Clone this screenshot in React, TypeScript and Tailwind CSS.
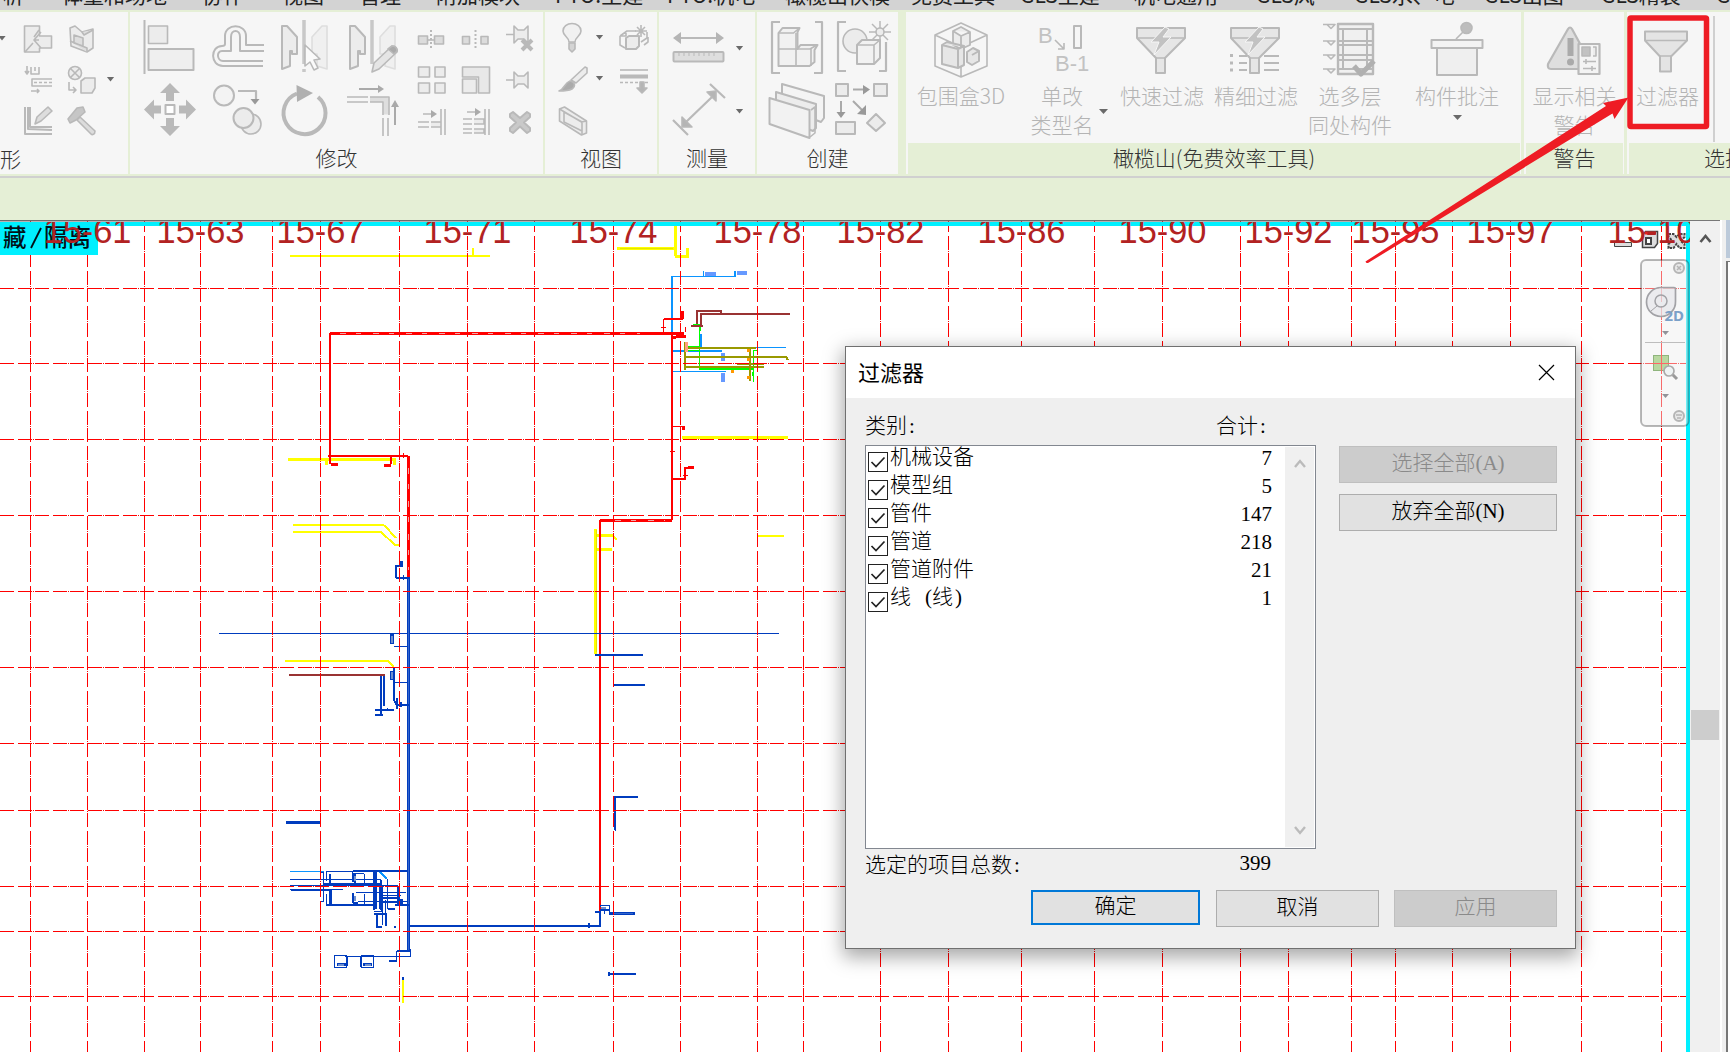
import React from "react";

const SANS = 'font-["Noto_Sans_CJK_SC",sans-serif]';
const SONG = 'font-["Liberation_Serif","Noto_Sans_CJK_SC",serif]';

type BoxProps = { x: number; y: number; w: number; h: number; children?: React.ReactNode };

/* A slice of the ribbon drawing plane, so neighbouring icons share one coordinate system. */
function Glyph({ x, y, w, h, children }: BoxProps) {
  return (
    <svg
      className="block shrink-0"
      width={w}
      height={h}
      viewBox={`${x} ${y} ${w} ${h}`}
      fill="#ececec"
      stroke="#b9b9b9"
      strokeWidth="1.6"
      strokeLinejoin="round"
    >
      {children}
    </svg>
  );
}

const Caret = ({ x, y }: { x: number; y: number }) => (
  <path d={`M${x - 3.6} ${y - 2}h7.2l-3.6 4.4z`} fill="#6a6a6a" stroke="none" />
);

const tabs: [number, string][] = [
  [-18, "分析"], [62, "体量和场地"], [202, "协作"], [282, "视图"], [359, "管理"], [436, "附加模块"],
  [555, "PTO.土建"], [667, "PTO.机电"], [785, "橄榄山快模·免费工具"], [1020, "GLS土建"],
  [1134, "机电通用"], [1256, "GLS风"], [1354, "GLS水、电"], [1484, "GLS出图"], [1601, "GLS精装"], [1716, "GLS"], [1800, ""],
];

function TabStrip() {
  return (
    <div className="h-[10px] shrink-0 overflow-hidden bg-[#d3d3d3]">
      <div className="-mt-[20px] -ml-[18px] flex h-[28px] text-[21px] leading-[28px] text-[#222] whitespace-nowrap">
        {tabs.slice(0, -1).map(([x, label], i) => (
          <span key={i} className="shrink-0" style={{ width: tabs[i + 1][0] - x }}>
            {label}
          </span>
        ))}
      </div>
    </div>
  );
}

function Panel({ title, width, green, children }: { title: string; width: string; green?: boolean; children: React.ReactNode }) {
  return (
    <div className={`flex shrink-0 flex-col bg-[#f6f6f6] ${width}`}>
      <div className="flex h-[131px]">{children}</div>
      <div
        className={`h-[31px] text-center text-[21px] leading-[29px] font-light whitespace-nowrap text-[#333] ${green ? "ml-[2px] mr-[1px] bg-[#e5efd6]" : ""}`}
      >
        {title}
      </div>
    </div>
  );
}

function BigButton({ width, lines, icon, caret }: { width: string; lines: string[]; icon: React.ReactNode; caret?: "side" | "below" }) {
  return (
    <div className={`relative flex shrink-0 flex-col items-center ${width}`}>
      <div className="h-[69px]">{icon}</div>
      <div className="text-center text-[21px] leading-[28.5px] font-light whitespace-nowrap text-[#b4b4b4]">
        {lines.map((l) => (
          <div key={l}>{l}</div>
        ))}
      </div>
      {caret === "side" && (
        <svg className="absolute right-[5px] bottom-[28px]" width="9" height="6" viewBox="0 0 9 6">
          <path d="M0 0h9L4.500 5z" fill="#6a6a6a" />
        </svg>
      )}
      {caret === "below" && (
        <svg className="mt-[5px]" width="9" height="6" viewBox="0 0 9 6">
          <path d="M0 0h9L4.500 5z" fill="#6a6a6a" />
        </svg>
      )}
    </div>
  );
}

const Funnel = ({ x, bolt, list }: { x: number; bolt?: boolean; list?: boolean }) => (
  <Glyph x={x - 39} y={12} w={80} h={69}>
    {list && (
      <path
        d={`M${x - 16} 56h8M${x - 16} 63h8M${x - 16} 70h8M${x + 9} 56h15M${x + 9} 63h15M${x + 9} 70h15`}
        strokeWidth="2"
      />
    )}
    {list && <path d={`M${x - 25} 55.500h3M${x - 25} 63h3M${x - 25} 70h3`} strokeWidth="3" />}
    <path d={`M${x - 24} 28h48v10l-20 20v15h-9v-15l-19-20z`} fill="#e6e6e6" strokeWidth="2" />
    <path d={`M${x - 24} 38h48M${x - 5} 58h9`} />
    {bolt && <path d={`M${x + 4} 27l-14 15h8l-5 13 17-18h-8l6-8z`} fill="#c2c2c2" stroke="#f6f6f6" strokeWidth="1" />}
  </Glyph>
);

function Ribbon() {
  return (
    <div className="flex h-[166px] shrink-0 bg-[#e5efd6] pt-[2px] pb-[2px]">
      <Panel title="" width="w-[128px]">
        <div className="-mr-[128px] w-[128px] shrink-0 pt-[8px]">
          <Glyph x={0} y={20} w={128} h={123}>
            <Caret x={2} y={38} />
            <path d="M24.500 26h15v10h12v12h-12v4h-15z" />
            <path d="M41 32l-7 8 7 8M34 40h5M39 30l-5 7M25 52l8-9" fill="none" />
            <path d="M70 28l5-2 7 6 11-3v19l-6 4-16-6z" />
            <path d="M74 35l9 3v8l-9-3zM82 32l2 3 9-5M87 52v-4l-17-7" fill="#dedede" />
            <path d="M27 66v8m-2-3l2 3 2-3M31 67v7h8v-7M35 67v4" fill="none" />
            <path d="M52 79H32v7h20M31 91h8m-2-2l2 2-2 2" fill="none" />
            <path d="M34 82.500h18" strokeDasharray="3 2" />
            <circle cx="75" cy="73" r="6.500" />
            <path d="M70.500 68.500l9 9m0-9l-9 9M69 82v8h7m-3-3l3 3-3 3" fill="none" />
            <path d="M81 81l4-3h10v10l-3 5H81z" />
            <Caret x={110.500} y={79} />
            <path d="M25 107v27h27M30 107v20h22M28 107v22l24 1" fill="none" strokeWidth="2" />
            <path d="M35 124l2-7 11-10 4 4-11 10z" fill="#ddd" />
            <path d="M68 119l9-11 6-1 2 5-9 8-6 3z" fill="#c6c6c6" />
            <path d="M80 117l15 14c0 4-3 4-4 3l-14-14z" fill="#dcdcdc" />
          </Glyph>
        </div>
        <span className="relative top-[132px] text-[21px] leading-[28px] font-light text-[#333]">形</span>
      </Panel>
      <div className="w-[2px] shrink-0" />
      <Panel title="修改" width="w-[413px]">
        <div className="grid grid-cols-[68px_68px_68px_68px] content-start pt-[3px] pl-[6px]">
          <Glyph x={136} y={15} w={68} h={64}>
            <path d="M144.500 20v54" strokeWidth="2" />
            <rect x="148.500" y="26" width="19" height="17.500" />
            <rect x="148.500" y="49" width="45" height="21" strokeWidth="2" fill="#efefef" />
          </Glyph>
          <Glyph x={204} y={15} w={68} h={64}>
            <g fill="none" strokeWidth="2">
              <path d="M264 45H246V36C246 23 225 23 225 36V44Q225 46 222 46C210 46 210 66 223 66H263" />
              <path d="M264 51H240V37C240 29 231 29 231 37V51H222C216 51 217 61 223 61H263" />
            </g>
          </Glyph>
          <Glyph x={272} y={15} w={68} h={64}>
            <path d="M282 26h5l10 11v17h-5v-3h-2v15l-8 3z" strokeWidth="2" />
            <path d="M327 26h-5l-10 11v17h5v12l10 3z" stroke="#dedede" fill="#f0f0f0" />
            <path d="M304 20v44M304 69v3" stroke="#c8c8c8" strokeWidth="3.500" />
            <path d="M305 45l15 14-6 1 4 8-4 2-4-8-5 4z" fill="#fafafa" />
          </Glyph>
          <Glyph x={340} y={15} w={68} h={64}>
            <path d="M350 26h5l10 11v17h-5v-3h-2v15l-8 3z" strokeWidth="2" />
            <path d="M395 26h-5l-10 11v17h5v12l10 3z" stroke="#dedede" fill="#f0f0f0" />
            <path d="M372 20v44" stroke="#c8c8c8" strokeWidth="3.500" />
            <path d="M372 72l2-9 18-17c4 0 6 3 5 6l-18 17z" fill="#e5e5e5" />
            <path d="M388 49l6 5 3-3c0-4-2-5-5-5z" fill="#aaa" />
          </Glyph>
          <Glyph x={136} y={79} w={68} h={64}>
            <path
              d="M170 83l10 10h-6v8h-8v-8h-6zM170 136l10-10h-6v-8h-8v8h-6zM144 109.500l10-10v6h7v8h-7v6zM196 109.500l-10-10v6h-7v8h7v6z"
              fill="#b9b9b9"
              stroke="none"
            />
            <rect x="165.500" y="105" width="9" height="9" fill="#fff" strokeWidth="2" />
          </Glyph>
          <Glyph x={204} y={79} w={68} h={64}>
            <circle cx="251" cy="124" r="10" />
            <circle cx="224" cy="95.500" r="10" fill="#f3f3f3" strokeWidth="2" />
            <circle cx="243.500" cy="118" r="10" strokeWidth="2" />
            <path d="M238 91h18v9" fill="none" strokeWidth="2.200" />
            <path d="M250.500 99h9l-4.500 5.500z" fill="#999" stroke="none" />
          </Glyph>
          <Glyph x={272} y={79} w={68} h={64}>
            <path d="M318 97A21 21 0 1 1 297 93.500" fill="none" strokeWidth="4" />
            <path d="M296.500 85l16.500 8-16 9z" fill="#b0b0b0" stroke="none" />
          </Glyph>
          <Glyph x={340} y={79} w={68} h={64}>
            <path d="M359 89h20M395 125v-19" stroke="#aaa" strokeWidth="2" />
            <path d="M378 85l6 4-6 4zM391 107l4-7 4 7z" fill="#aaa" stroke="none" />
            <path d="M370 99.500h16v15" stroke="#dedede" strokeWidth="5" fill="none" />
            <path d="M347 97h21M347 102h21M370 97h19v18M370 102h13v13M383 118v18M388 118v18" fill="none" strokeWidth="1.600" />
          </Glyph>
        </div>
        <div className="grid grid-cols-[44px_44px_44px] content-start pt-[8px]">
          <Glyph x={408} y={20} w={44} h={41}>
            <rect x="418.500" y="36" width="9" height="8" fill="#dcdcdc" />
            <rect x="434.500" y="36" width="9" height="8" fill="#dcdcdc" />
            <path d="M427 40h8" />
            <path d="M431 30v20" strokeDasharray="2 2" strokeWidth="2" />
          </Glyph>
          <Glyph x={452} y={20} w={44} h={41}>
            <rect x="462.500" y="36.500" width="7" height="7.500" fill="#dcdcdc" />
            <rect x="481" y="36.500" width="7" height="7.500" fill="#dcdcdc" />
            <path d="M475.500 30v20" strokeDasharray="2 2" strokeWidth="2" />
          </Glyph>
          <Glyph x={496} y={20} w={44} h={41}>
            <path d="M506 34.500h8M514 26v17l4-4h6l4 4V26l-4 4h-6z" />
            <path d="M522 40l10 10m0-10l-10 10" strokeWidth="4" />
          </Glyph>
          <Glyph x={408} y={61} w={44} h={41}>
            <path d="M418.500 67h11v10h-11zM435 67h10v10h-10zM418.500 83h11v10h-11zM435 83h10v10h-10z" />
          </Glyph>
          <Glyph x={452} y={61} w={44} h={41}>
            <path d="M462.500 67h27v26h-11V77h-16z" fill="#e8e8e8" />
            <rect x="462.500" y="79" width="14" height="14" />
          </Glyph>
          <Glyph x={496} y={61} w={44} h={41}>
            <path d="M506 80h8M514 72v16l4-4h6l4 4V72l-4 4h-6z" />
          </Glyph>
          <Glyph x={408} y={102} w={44} h={41}>
            <path d="M423 114h10M418 122h11M418 127h11M431 122h10v5h-10M441 109v26M445 109v26" strokeWidth="1.600" />
            <path d="M431 110l6 4-6 4z" fill="#aaa" stroke="none" />
          </Glyph>
          <Glyph x={452} y={102} w={44} h={41}>
            <path d="M467 112h10M463 119h9M463 124h9M463 129h9M463 133h9M474 119h10v5h-10M474 129h10v4h-10M485 109v26M489 109v26" strokeWidth="1.600" />
            <path d="M475 108l6 4-6 4z" fill="#aaa" stroke="none" />
          </Glyph>
          <Glyph x={496} y={102} w={44} h={41}>
            <path d="M510 114l3-2 7 6 7-6 3 2v3l-6 5.500 6 5.500v3l-3 2-7-6.500-7 6.500-3-2v-3l6-5.500-6-5.500z" fill="#c9c9c9" strokeWidth="2" />
          </Glyph>
        </div>
      </Panel>
      <div className="w-[2px] shrink-0" />
      <Panel title="视图" width="w-[112px]">
        <div className="grid grid-cols-[64px_48px] content-start pt-[8px]">
          <Glyph x={545} y={20} w={64} h={41}>
            <path d="M569 42c0-5-6-6-6-11a9 7.500 0 0 1 18 0c0 5-6 6-6 11z" fill="#f1f1f1" />
            <path d="M569 43h6v6l-3 3-3-3z" fill="#d4d4d4" />
            <Caret x={599.500} y={37} />
          </Glyph>
          <Glyph x={609} y={20} w={48} h={41}>
            <path d="M620 36l7-5h9M620 36v9l5 3M620 36h6v-5M641 42l6-4v-6M644 45l4-3v-5" fill="none" />
            <path d="M626 38l3-2h10v10l-3 3h-10z" strokeWidth="2" />
            <path d="M641 25v12M635 31h12M637 27l8 8M645 27l-8 8" />
          </Glyph>
          <Glyph x={545} y={61} w={64} h={41}>
            <path d="M571 80l14-13 2 1v5l-11 10z" />
            <path d="M570 81c5 1 6 5 2 8-4 2-8 2-13 2 6-2 5-8 11-10z" fill="#ababab" />
            <Caret x={599.500} y={78} />
          </Glyph>
          <Glyph x={609} y={61} w={48} h={41}>
            <path d="M620 70h28" />
            <path d="M620 76.500h28" strokeWidth="4" />
            <path d="M620 82.500h28" strokeDasharray="3 2" />
            <path d="M640 82h4v6h3l-5 5-5-5h3z" fill="#b5b5b5" />
          </Glyph>
          <Glyph x={545} y={102} w={64} h={41}>
            <path d="M559.500 109l5-2 22 14v12l-5 2-22-14z" />
            <path d="M564 112l18 10v12M559.500 109l22 13 5-1M564 112v10l18 9" fill="none" />
          </Glyph>
        </div>
      </Panel>
      <div className="w-[2px] shrink-0" />
      <Panel title="测量" width="w-[96px]">
        <div className="flex flex-col pt-[3px]">
          <Glyph x={659} y={15} w={96} h={64}>
            <path d="M677 38h42" strokeWidth="2" />
            <path d="M673 38l8-6v12zM724 38l-8-6v12z" fill="#b5b5b5" stroke="none" />
            <rect x="673.500" y="52" width="50" height="9.500" rx="1" fill="#dedede" strokeWidth="2" />
            <path d="M679 53v3m5-3v3m5-3v3m5-3v3m5-3v3m5-3v3m5-3v3m5-3v3" strokeWidth="1" />
            <Caret x={739.500} y={48} />
          </Glyph>
          <Glyph x={659} y={79} w={96} h={64}>
            <path d="M673 120l15 15M710 84l15 14M686 122l26-25" strokeWidth="2.200" />
            <path d="M682 117v10h10zM716 91v10l-9-9z" fill="#b5b5b5" />
            <Caret x={739.500} y={111} />
          </Glyph>
        </div>
      </Panel>
      <div className="w-[2px] shrink-0" />
      <Panel title="创建" width="w-[141px]">
        <div className="grid grid-cols-[70px_64px] content-start pt-[3px] pl-[7px]">
          <Glyph x={764} y={15} w={70} h={64}>
            <path d="M780 22h-8v51h8M815 22h7v51h-8" fill="none" strokeWidth="2.200" />
            <path d="M778.500 33l4-5h17l-2 4v17l3-4h17l-3 5v12l-5 4h-31z" fill="#f1f1f1" strokeWidth="2" />
            <path d="M778.500 33h15l6-5M796 33v33M779 49h31l7-4M811 49v17" fill="none" />
          </Glyph>
          <Glyph x={834} y={15} w={64} h={64}>
            <path d="M846 22h-8v49h8M879 71h7V42" fill="none" strokeWidth="2.200" />
            <circle cx="855" cy="41" r="12" />
            <path d="M857 45l5-5h18v18l-6 6h-17z" fill="#f2f2f2" strokeWidth="2" />
            <path d="M857 45h17l6-5M874 45v19" fill="none" />
            <path d="M880 21v22M869 32h22M872 24l16 16M888 24l-16 16" strokeWidth="1.500" />
            <circle cx="880" cy="32" r="4" />
          </Glyph>
          <Glyph x={764} y={79} w={70} h={64}>
            <path d="M782 84l42 12v22l-3 4-39-15z" fill="#f4f4f4" strokeWidth="2" />
            <path d="M776 92l40 12v24l-3 3-37-15z" strokeWidth="2" />
            <path d="M769.500 98l40 12v28l-40-14z" fill="#f2f2f2" strokeWidth="2" />
            <path d="M811 110l4-3v26l-5 4" fill="none" />
          </Glyph>
          <Glyph x={834} y={79} w={64} h={64}>
            <path d="M836 84h12v12h-12zM874 84h13v12h-13zM836 122h19v12h-19zM876 114l9 9-9 8-9-8z" strokeWidth="2" />
            <path d="M853 89.500h11M841 101v12M853 101l10 10" stroke="#aaa" strokeWidth="2" />
            <path d="M863 85l7 4.500-7 5zM836.500 112h9l-4.500 6zM866 115v-10l-9 9z" fill="#999" stroke="none" />
          </Glyph>
        </div>
      </Panel>
      <div className="w-[8px] shrink-0" />
      <Panel title="橄榄山(免费效率工具)" width="w-[615px]" green>
        <div className="flex pl-[5px]">
          <BigButton
            width="w-[100px]"
            lines={["包围盒3D"]}
            icon={
              <Glyph x={921} y={12} w={80} h={69}>
                <path d="M961 23l26 12v31l-26 11-26-11V35zM935 35l26 12 26-12M961 47v30" fill="none" />
                <path d="M953 31l8-4 9 5v13l-9 4-8-4zM953 31l8 5 9-4M961 36v12" strokeWidth="1.800" />
                <path d="M942 45l5-3 17 4v19l-6 3-16-4zM958 49v18M942 45l16 4 6-3M967 52l6-4 6 3v10l-7 4-5-3zM972 55l7-4" fill="#e6e6e6" strokeWidth="2" />
              </Glyph>
            }
          />
          <BigButton
            width="w-[102px]"
            lines={["单改", "类型名"]}
            caret="side"
            icon={
              <Glyph x={1023} y={12} w={80} h={69}>
                <g fill="#c2c2c2" stroke="none" fontFamily="Liberation Sans" fontSize="22">
                  <text x="1039" y="43">B</text>
                  <text x="1056" y="71">B-1</text>
                </g>
                <rect x="1075" y="26" width="7" height="22" fill="none" strokeWidth="2" />
                <path d="M1056 40l9 9m0-6v6h-6" fill="none" />
              </Glyph>
            }
          />
          <BigButton width="w-[98px]" lines={["快速过滤"]} icon={<Funnel x={1162} bolt />} />
          <BigButton width="w-[90px]" lines={["精细过滤"]} icon={<Funnel x={1256} bolt list />} />
          <BigButton
            width="w-[98px]"
            lines={["选多层", "同处构件"]}
            icon={
              <Glyph x={1310} y={12} w={80} h={69}>
                <path d="M1323 24.500h12l-4 4-4-4M1323 41h12l-4 4-4-4M1323 55h12l-4 4-4-4M1323 69h12l-4 4-4-4" fill="none" />
                <rect x="1338" y="24" width="35" height="50" fill="#f0f0f0" strokeWidth="2.400" />
                <path d="M1338 29h35M1338 41h35M1338 45h35M1338 55h35M1338 60h35M1338 69h35M1343 30v38M1367 30v38" strokeWidth="2" />
                <path d="M1354 66l7 8 13-13" fill="none" stroke="#b0b0b0" strokeWidth="5" />
              </Glyph>
            }
          />
          <BigButton
            width="w-[116px]"
            lines={["构件批注"]}
            caret="below"
            icon={
              <Glyph x={1417} y={12} w={80} h={69}>
                <path d="M1456 39l9-9" />
                <circle cx="1466.500" cy="28" r="5.500" fill="#bdbdbd" />
                <rect x="1437" y="47" width="40" height="28" fill="#efefef" strokeWidth="2" />
                <rect x="1431.500" y="40" width="51" height="8" fill="#f3f3f3" strokeWidth="2" />
              </Glyph>
            }
          />
        </div>
      </Panel>
      <div className="w-[3px] shrink-0" />
      <Panel title="警告" width="w-[100px]" green>
        <BigButton
          width="w-[101px]"
          lines={["显示相关", "警告"]}
          icon={
            <Glyph x={1535} y={12} w={80} h={69}>
              <path d="M1568 29q2-3 4 0l19 35q1 5-3 5h-37q-4 0-3-5z" fill="#dedede" strokeWidth="2.200" />
              <path d="M1570.500 38v18" stroke="#aaa" strokeWidth="6" />
              <circle cx="1570.500" cy="62" r="3.500" fill="#aaa" stroke="none" />
              <rect x="1578.500" y="44" width="21" height="30" fill="#f4f4f4" strokeWidth="2.200" />
              <rect x="1582" y="47" width="8" height="9" fill="#c2c2c2" />
              <path d="M1593 47h3v9h-3M1583 61.500h13M1583 68.500h13M1586 59v5M1592 66v5" />
            </Glyph>
          }
        />
      </Panel>
      <div className="w-[3px] shrink-0" />
      <Panel title="选择" width="w-[195px]" green>
        <BigButton
          width="w-[81px]"
          lines={["过滤器"]}
          icon={
            <Glyph x={1628} y={12} w={80} h={69}>
              <path d="M1645 31.500h42v9l-16 16v15h-11v-15l-15-16z" fill="#e4e4e4" strokeWidth="2" />
              <path d="M1645 40.500h42M1660 56h11" />
            </Glyph>
          }
        />
        <div className="mt-[4px] ml-[5px] h-[126px] w-[2px] bg-[#d0d0d0]" />
      </Panel>
    </div>
  );
}

const gridX = [30, 87, 144, 200, 272, 320, 399, 467, 534, 613, 680, 757, 803, 880, 948, 1021, 1094, 1162, 1240, 1288, 1351, 1395, 1452, 1510, 1581, 1661];
const gridY = [288, 363, 439, 515, 591, 667, 743, 810, 886, 931, 996];
const labels: [number, string][] = [
  [45, "15-61"], [158, "15-63"], [278, "15-67"], [425, "15-71"], [571, "15-74"], [715, "15-78"], [838, "15-82"],
  [979, "15-86"], [1120, "15-90"], [1246, "15-92"], [1353, "15-95"], [1468, "15-97"], [1609, "15-10"],
];

type Pipe = [string, number, string];
const R = "#ff0000";
const Y = "#ffff00";
const B = "#003cbe";
const L = "#0a94ff";
const O = "#999900";
const M = "#993333";
const G = "#00ff00";
const pipes: Pipe[] = [
  [Y, 2, "M290 256H490M675 248v8M757 536h27M293 525H384M293 532H381M285 661H388M403 980v23"],
  [Y, 2, "M472.500 248v8M384 525l12 13M381 532l14 13h4M388 661l6 6M612 535l5 5"],
  [Y, 3, "M617 248.500H675M675.500 226v30M675 256h12v-8M682 437.500h106M288 459.500H394v5M326.500 460v5M595.500 529V654M596 535.500h16M596 549.500h16"],
  ["#e4e400", 1, "M620 248.500h53M596 530v122"],
  [L, 1, "M672 276.500H735M703.500 271v6M672 371.500h54M756 347.500h30M290 871.500h34"],
  [L, 2, "M672 276V333M735 271v6M672 351h50M701 334v14M380 872l7 7"],
  ["#6699ff", 4, "M705 274h11M737 273h10M723 353v8M723 373v9"],
  [G, 1, "M699.500 327V369M686 346.500h14M686 350.500h14M686 356.500h14M753.500 351v31M753 350.500h4M753 364.500h4M693 324.500h7v6"],
  [G, 2, "M699 369h54M753 372v4"],
  [O, 2, "M685 342v28M684 348h72M685 357h101l2 3M684 367h80M737 364h27M750 348v33"],
  ["#ff9900", 3, "M747 350.500h3M747 359.500h3M747 377.500h3M731 371h3"],
  [M, 2, "M697 324V311h24v3M701 325V314h89M691 326h12M289 675h96"],
  [R, 2, "M330 333V464M328 456H408M672 333V520M600 520V911M664 319h19M672 479h13v-11h5M391 455v9"],
  [R, 1, "M663.500 319v13M661 327h5M672 426.500h11M680.500 426v7M670 451.500h5M683 475.500h5M403.500 453v5M685.500 327v5"],
  [R, 3, "M330 333.500H684M408.500 456V577M600 520.500h72M331 464.500h7M384 465.500h7M682.500 311v8M688 467.500h6M672 338l12-3M680 336h6M683 426v4"],
  ["#ffa080", 3, "M686.500 342v10"],
  [B, 1, "M219 633.500H779M394 682.500h15M394 646.500h15M615 797v34M345 956.500h65v-8"],
  [B, 3, "M408.500 577V952M286 822.500h34M610 913.500h25"],
  ["#3366cc", 1, "M408.500 577V952M613 913.500h20"],
  [B, 2, "M595 655h48M614 685h31M614 797h24M615 797v33M409 926H600V911M609 974h27M589 923v5M609 972v4M396 578v-12h5v-5M396 578h13M402 561v6M381 676v38M384 676v30M375 710h19M375 715h8M394 667v33l3 6M396 705h13M397 698v11M401 702v5M595 912h5M600 910h10"],
  [B, 1, "M600.500 907v-2h9v10M604.500 911v3M403.500 575v5M387.500 710v-2"],
  [B, 4, "M392 634v10M392 671v9"],
  ["#6f90cd", 2, "M392 636v7M392 672v7M601 907.500h5"],
  [B, 1, "M290 879.500h91M290 885.500h108M290 889.500h53M323.500 871.500v30M326.500 871v10M326.500 894v11M326 871.500h30M352 871.500v10M364 873.500v10M364 893.500v10M356 892.500h50M352 873.500h12M358 901.500h50M381 895.500h20M387.500 879v30M382.500 885v40M374 911.500h7v-10M336 955.500h-1.500v12h12v-12zM361.500 955v12h12v-12zM396.500 951v10M385.500 900v26M321 872.500h3M321 901h3"],
  [B, 2, "M353 871H407M325 884h55M291 890h40M326 905h48M330 874v9M330 890v14M374 870v40M381 880v30M398 887v17M382 898h17M382 902h19M377 914v12M374 914h3M376 927h6M386 913v13M374 914h11M355 874v9M353 893v10M388 909h7M395 905h14M394 927h2M397 951h12M389 961h8M361 957v10M347 956v10M403 977v3"],
  [B, 3, "M324 884.500h58M330.500 890v14M375 872v37M380.500 885v24M398 888v16M353 874v8M358 903h-5M337 964h9M363 964h9M401 899v5"],
  ["#6f90cd", 2, "M354.500 876v5M354.500 896v5M338 965h6M365 965h6"],
];

function Drawing() {
  return (
    <svg className="block" width="1690" height="832" viewBox="0 220 1690 832">
      <defs>
        <clipPath id="sheet">
          <rect x="0" y="222" width="1690" height="830" />
        </clipPath>
      </defs>
      <rect x="0" y="220" width="1690" height="832" fill="#fff" />
      {pipes.map(([c, w, d], i) => (
        <path key={i} d={d} stroke={c} strokeWidth={w} fill="none" shapeRendering="crispEdges" />
      ))}
      <path
        d="M340 333.500H640M408.500 468V570M615 520.500H665"
        stroke="#f2a6a6"
        strokeDasharray="6 10 5 12"
        fill="none"
        shapeRendering="crispEdges"
      />
      <g stroke="#f00" strokeWidth="1" shapeRendering="crispEdges" fill="none">
        {gridX.map((x) => (
          <path key={x} d={`M${x + 0.5} 218V1052`} strokeDasharray="14 4 14 1 1 1" />
        ))}
        {gridY.map((y) => (
          <path key={y} d={`M0 ${y + 0.5}H1690`} strokeDasharray="14 4 14 1 1 1" />
        ))}
      </g>
      <path d="M0 224H1690M1688 222V1052" stroke="#00f0ff" strokeWidth="4" />
      <rect x="0" y="222" width="98" height="33" fill="#00f0ff" />
      <g fill="#001018" fontFamily="Noto Sans CJK SC" fontSize="23.500" fontWeight="500">
        <text x="3" y="246">藏</text>
        <path d="M31 248L41 228" stroke="#001018" strokeWidth="1.800" />
        <text x="44" y="246">隔离</text>
      </g>
      <g stroke="#444" fill="#ddd">
        <path d="M1614.500 242.500h17v4h-17z" />
        <path d="M1642.500 235.500l3-4h12v12l-3 4h-12z" strokeWidth="1.500" />
        <path d="M1646 238h5v6h-5z" fill="#fff" strokeWidth="2" />
        <path d="M1645 233h11" stroke="#e02020" strokeWidth="3" />
        <path d="M1668.500 234h5l3 3 3-3h5v3l-4 4 4 3v4h-5l-3-4-3 4h-5v-4l4-3-4-4z" strokeWidth="2" strokeDasharray="2.500 1" />
      </g>
      <g clipPath="url(#sheet)" fill="#b22222" fontFamily="Liberation Sans" fontSize="35.500">
        {labels.map(([x, t]) => (
          <text key={t} x={x - 1.500} y="242.600" textLength="88" lengthAdjust="spacingAndGlyphs">
            {t}
          </text>
        ))}
      </g>
      <path d="M0 220.500H1690" stroke="#6b6b6b" strokeWidth="2" />
    </svg>
  );
}

function NavBar() {
  return (
    <svg className="absolute top-[38px] left-[1640px]" width="50" height="170" viewBox="1640 258 50 170" fill="none">
      <rect x="1641" y="260" width="47.500" height="166" rx="5" fill="#eeeeee" fillOpacity="0.450" stroke="#000" strokeOpacity="0.280" strokeWidth="2" />
      <circle cx="1679" cy="268" r="5" fill="#e8e8e8" stroke="#b5b5b5" strokeWidth="2" />
      <path d="M1677 266l4 4m0-4l-4 4" stroke="#b5b5b5" strokeWidth="1.500" />
      <path d="M1661 287.500h13q1.500 0 1.500 1.500v12.500a14.500 14.500 0 1 1-14.500-14z" fill="#e6e6ea" fillOpacity="0.700" stroke="#a2a2a6" strokeWidth="1.700" />
      <circle cx="1661" cy="301" r="6" stroke="#a2a2a6" strokeWidth="1.500" />
      <path d="M1657 306l-6 5" stroke="#a2a2a6" />
      <text x="1664.500" y="320.500" fontSize="15" fontWeight="700" fontFamily="Noto Sans" fill="#7ba0c8">
        2D
      </text>
      <path d="M1662 331h7l-3.500 4z M1662 394h7l-3.500 4z" fill="#929298" />
      <path d="M1645 342.500h40" stroke="#bdbdbd" />
      <rect x="1653.500" y="355.500" width="15" height="15" fill="#a8cf8a" fillOpacity="0.800" stroke="#8fb57d" />
      <path d="M1661.500 350v24M1650 363.500h21" stroke="#f66" />
      <path d="M1672 374l5 5" stroke="#999" strokeWidth="3" />
      <circle cx="1669" cy="371" r="5" fill="#eef3f3" stroke="#aaa" strokeWidth="1.700" />
      <circle cx="1679" cy="416" r="5" fill="#e8e8e8" stroke="#b5b5b5" strokeWidth="2" />
      <path d="M1676 415h6M1677 418h4" stroke="#b5b5b5" strokeWidth="1.500" />
    </svg>
  );
}

const rows: [React.ReactNode, string][] = [
  ["机械设备", "7"],
  ["模型组", "5"],
  ["管件", "147"],
  ["管道", "218"],
  ["管道附件", "21"],
  [
    <>
      线<span className="inline-block w-[21px] text-right">(</span>线<span className="pl-[2px]">)</span>
    </>,
    "1",
  ],
];

function Btn({ label, cls }: { label: string; cls: string }) {
  return <button className={`flex items-center justify-center pb-[2px] text-[21px] leading-none font-light ${cls}`}>{label}</button>;
}

function FilterDialog() {
  return (
    <div className={`absolute top-[346px] left-[845px] flex h-[603px] w-[731px] flex-col border border-[#707070] bg-[#efefef] text-[21px] leading-[28px] font-light text-black shadow-[0_6px_18px_2px_rgba(0,0,0,0.35)] ${SONG}`}>
      <div className="flex h-[51px] shrink-0 items-center justify-between bg-white pr-[20px] pb-[1px] pl-[12px]">
        <span className={`-mt-[3px] text-[22px] font-normal ${SANS}`}>过滤器</span>
        <svg width="17" height="17" viewBox="0 0 17 17">
          <path d="M1 1l15 15M16 1L1 16" stroke="#000" strokeWidth="1.200" />
        </svg>
      </div>
      <div className="flex pt-[14px] pl-[19px]">
        <span className="w-[351px]">类别<span className="pl-[2px]">:</span></span>
        <span>合计<span className="pl-[2px]">:</span></span>
      </div>
      <div className="mt-[5px] flex pl-[19px]">
        <div className="flex h-[404px] w-[451px] shrink-0 border border-[#828790] bg-white p-[1px]">
          <div className="flex-1">
            {rows.map(([name, n]) => (
              <div key={n} className="flex h-[28px] items-start">
                <svg className="mt-[5px] ml-[1px] shrink-0" width="20" height="20" viewBox="0 0 20 20">
                  <rect x="0.500" y="0.500" width="19" height="19" fill="#fff" stroke="#222" />
                  <path d="M3.500 10l4.500 4.500 8.500-9" fill="none" stroke="#222" strokeWidth="1.700" />
                </svg>
                <span className="ml-[2px] flex-1 leading-[20px]">{name}</span>
                <span className="mr-[13px] leading-[22px]">{n}</span>
              </div>
            ))}
          </div>
          <div className="flex w-[29px] flex-col items-center justify-between bg-[#f0f0f0] py-[12px]">
            <svg width="12" height="9" viewBox="0 0 12 9">
              <path d="M1 8l5-6 5 6" fill="none" stroke="#bbb" strokeWidth="2.400" />
            </svg>
            <svg width="12" height="9" viewBox="0 0 12 9">
              <path d="M1 1l5 6 5-6" fill="none" stroke="#bbb" strokeWidth="2.400" />
            </svg>
          </div>
        </div>
        <div className="ml-[23px] flex w-[218px] flex-col gap-[11px] pt-[1px]">
          <Btn label="选择全部(A)" cls="h-[37px] border border-[#bfbfbf] bg-[#ccc] text-[#8a8a8a]" />
          <Btn label="放弃全部(N)" cls="h-[37px] border border-[#adadad] bg-[#e1e1e1] text-black" />
        </div>
      </div>
      <div className="flex justify-between pr-[304px] pl-[19px]">
        <span className="pt-[2px]">选定的项目总数<span className="pl-[2px]">:</span></span>
        <span>399</span>
      </div>
      <div className="mt-[11px] flex pl-[185px]">
        <Btn label="确定" cls="h-[35px] w-[169px] border-2 border-[#0078d7] bg-[#e1e1e1]" />
        <Btn label="取消" cls="ml-[16px] h-[37px] w-[163px] border border-[#adadad] bg-[#e1e1e1]" />
        <Btn label="应用" cls="ml-[15px] h-[37px] w-[163px] border border-[#bfbfbf] bg-[#ccc] text-[#8a8a8a]" />
      </div>
    </div>
  );
}

export default function App() {
  return (
    <div className={`relative flex h-[1052px] w-[1730px] flex-col overflow-hidden bg-[#e5efd6] ${SANS}`}>
      <TabStrip />
      <Ribbon />
      <div className="h-[2px] shrink-0 bg-[#d0d0d0]" />
      <div className="h-[42px] shrink-0" />
      <div className="relative flex h-[832px] shrink-0 bg-[#f0f0f0]">
        <Drawing />
        <NavBar />
        <div className="flex w-[30px] flex-col border-t border-[#777] pl-[1px]">
          <svg className="mt-[12px] ml-[8px]" width="13" height="11" viewBox="0 0 13 11">
            <path d="M1.500 9l5-6 5 6" fill="none" stroke="#555" strokeWidth="2.600" />
          </svg>
          <div className="mt-[466px] h-[30px] w-[28px] bg-[#cdcdcd]" />
        </div>
        <div className="w-[2px] bg-white" />
        <div className="w-[4px] bg-[#f0f0f0]" />
        <div className="flex flex-1 flex-col">
          <div className="h-[38px] bg-[#bccada]" />
          <div className="h-[3px]" />
          <div className="flex-1 border-t border-l-2 border-[#777] bg-white" />
        </div>
      </div>
      <FilterDialog />
      <svg className="absolute top-0 left-[1350px]" width="380" height="280" viewBox="1350 0 380 280">
        <rect x="1630" y="18" width="76.500" height="108.500" rx="1" fill="none" stroke="#ee1c24" strokeWidth="5.500" />
        <path d="M1365.500 261.500L1606 106L1603 103L1628.500 97.500L1614.500 119L1612.500 113.500L1368 263Q1366 263.500 1365.500 261.500z" fill="#ee1c24" />
      </svg>
    </div>
  );
}
